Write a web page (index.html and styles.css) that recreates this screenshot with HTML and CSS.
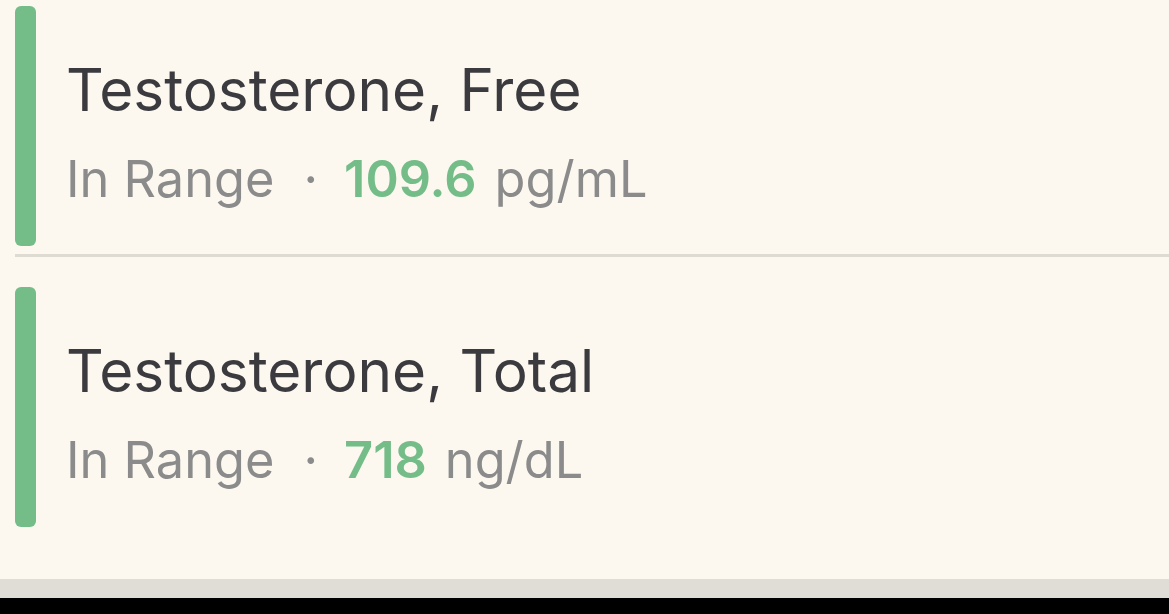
FILE: index.html
```html
<!DOCTYPE html>
<html>
<head>
<meta charset="utf-8">
<link rel="stylesheet" href="styles.css">
</head>
<body>
<div class="screen">
  <ul class="list">
    <li class="row row-first">
      <div class="bar"></div>
      <div class="info">
        <div class="title">Testosterone, Free</div>
        <div class="meta"><span class="status">In Range</span><span class="dot">·</span><span class="value">109.6</span><span class="unit">pg/mL</span></div>
      </div>
    </li>
    <li class="divider"></li>
    <li class="row">
      <div class="bar"></div>
      <div class="info">
        <div class="title">Testosterone, Total</div>
        <div class="meta"><span class="status">In Range</span><span class="dot">·</span><span class="value">718</span><span class="unit">ng/dL</span></div>
      </div>
    </li>
  </ul>
  <div class="footer-strip"></div>
  <div class="footer-black"></div>
</div>
</body>
</html>
```
FILE: styles.css
```css
html, body {
  margin: 0;
  padding: 0;
  background: #fcf8ef;
}
.screen {
  width: 1169px;
  height: 614px;
  display: flex;
  flex-direction: column;
  font-family: Inter, "Noto Sans", sans-serif;
  overflow: hidden;
}
.list {
  list-style: none;
  margin: 0;
  padding: 0;
  flex: 1;
}
.row {
  display: flex;
  gap: 30px;
  padding: 30px 0 0 15px;
}
.row-first {
  padding-top: 6px;
  padding-bottom: 8px;
}
.bar {
  width: 21px;
  height: 240px;
  border-radius: 6px;
  background: #74bd88;
  flex-shrink: 0;
}
.info {
  display: flex;
  flex-direction: column;
}
.title {
  font-size: 58.5px;
  color: #3b3a3e;
  line-height: 70px;
  margin-top: 49px;
}
.meta {
  font-size: 50.5px;
  line-height: 70px;
  margin-top: 19px;
  color: #8b8b8b;
  display: flex;
  align-items: baseline;
}
.dot {
  margin: 0 26px 0 29px;
}
.value {
  color: #74bd88;
  font-weight: 600;
  margin-right: 18px;
}
.divider {
  height: 3px;
  margin-left: 15px;
  background: #dedbd3;
}
.footer-strip {
  height: 19px;
  background: #e0ddd6;
}
.footer-black {
  height: 16px;
  background: #000;
}
```
